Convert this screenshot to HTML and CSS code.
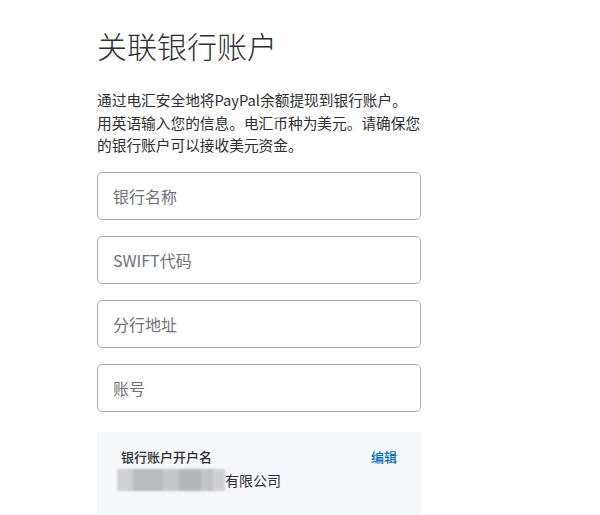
FILE: index.html
```html
<!DOCTYPE html>
<html lang="zh-CN">
<head>
    <meta charset="UTF-8">
    <meta name="viewport" content="width=device-width, initial-scale=1.0">
    <title>关联银行账户</title>
    <link rel="stylesheet" href="styles.css">
</head>
<body>
    <div class="bank-form">
        <h1>关联银行账户</h1>
        <p class="intro">
            通过电汇安全地将PayPal余额提现到银行账户。<br>
            用英语输入您的信息。电汇币种为美元。请确保您<br>
            的银行账户可以接收美元资金。
        </p>

        <div class="fields">
            <input class="field" type="text" placeholder="银行名称">
            <input class="field" type="text" placeholder="SWIFT代码">
            <input class="field" type="text" placeholder="分行地址">
            <input class="field" type="text" placeholder="账号">
        </div>

        <div class="holder-box">
            <div class="holder-head">
                <span class="holder-label">银行账户开户名</span>
                <a class="edit-link" href="#">编辑</a>
            </div>
            <div class="holder-name">
                <span class="masked">
                    <span class="m1"></span><span class="m2"></span><span class="m3"></span><span class="m4"></span><span class="m5"></span><span class="m6"></span>
                </span>有限公司
            </div>
        </div>
    </div>
</body>
</html>
```

FILE: styles.css
```css
body {
    margin: 0;
    padding: 0;
    background-color: #fff;
    color: #2c2e2f;
    font-family: "Noto Sans CJK SC", "Noto Sans", sans-serif;
}

.bank-form {
    width: 324px;
    margin-left: 97px;
    padding-top: 25px;
}

h1 {
    margin: 0;
    font-size: 30px;
    line-height: 40px;
    font-weight: 300;
    color: #2c2e2f;
}

.intro {
    margin: 24px 0 0;
    font-size: 14.7px;
    line-height: 22.5px;
    white-space: nowrap;
}

.fields {
    display: flex;
    flex-direction: column;
    gap: 16px;
    margin-top: 15px;
}

.field {
    box-sizing: border-box;
    width: 100%;
    height: 48px;
    padding: 0 15px;
    border: 1px solid #a9acae;
    border-radius: 5px;
    font-family: inherit;
    font-size: 16px;
    color: #2c2e2f;
    background: #fff;
    outline: none;
}

.field::placeholder {
    color: #6c7378;
}

.holder-box {
    margin-top: 20px;
    padding: 16px 24px 40px;
    background-color: #f5f7fa;
}

.holder-head {
    display: flex;
    justify-content: space-between;
    align-items: center;
    font-size: 13px;
    line-height: 18px;
    font-weight: 500;
}

.edit-link {
    color: #0070ba;
    text-decoration: none;
}

.holder-name {
    display: flex;
    align-items: center;
    margin-top: 2px;
    margin-left: -4px;
    font-size: 14px;
    line-height: 24px;
    color: #2c2e2f;
}

.masked {
    display: flex;
    height: 22px;
    filter: blur(1px);
}

.masked span {
    display: block;
    height: 100%;
}

.m1 { width: 16px; background: #cfd0d1; }
.m2 { width: 30px; background: #b9babb; }
.m3 { width: 16px; background: #c5c7c7; }
.m4 { width: 22px; background: #b4b6b7; }
.m5 { width: 12px; background: #c2c3c4; }
.m6 { width: 12px; background: #d0d1d2; }
```
